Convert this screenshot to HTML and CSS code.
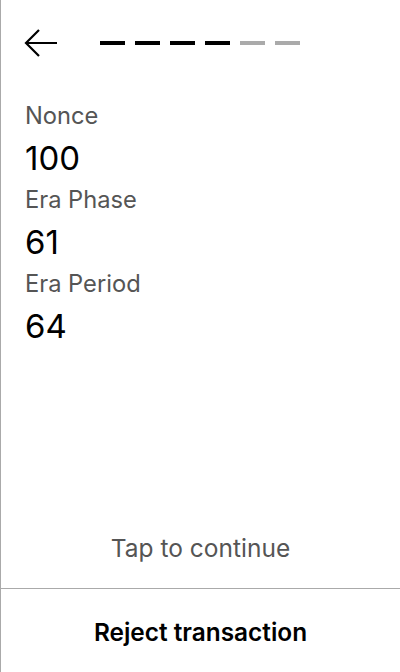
FILE: index.html
```html
<!DOCTYPE html>
<html>
<head>
<meta charset="utf-8">
<link rel="stylesheet" href="styles.css">
</head>
<body>
<div class="screen">
  <header class="header">
    <svg class="back" width="34" height="30" viewBox="0 0 34 30" fill="none" stroke="#000" stroke-width="2.2">
      <path d="M33 15 H2 M15 2 L2 15 L15 28"/>
    </svg>
    <div class="steps">
      <span class="step on"></span><span class="step on"></span><span class="step on"></span><span class="step on"></span><span class="step"></span><span class="step"></span>
    </div>
  </header>
  <main class="fields">
    <div class="label">Nonce</div>
    <div class="value">100</div>
    <div class="label">Era Phase</div>
    <div class="value">61</div>
    <div class="label">Era Period</div>
    <div class="value">64</div>
  </main>
  <div class="tap">Tap to continue</div>
  <div class="reject">Reject transaction</div>
</div>
</body>
</html>
```
FILE: styles.css
```css
html, body {
  margin: 0;
  padding: 0;
  background: #fff;
}
body {
  font-family: Inter, "Noto Sans", sans-serif;
}
.screen {
  height: 672px;
  box-sizing: border-box;
  border-left: 1px solid #aaa;
  display: flex;
  flex-direction: column;
}
.header {
  height: 86px;
  display: flex;
  align-items: center;
  padding-left: 23px;
  box-sizing: border-box;
}
.back {
  display: block;
}
.steps {
  display: flex;
  gap: 10px;
  margin-left: 42px;
}
.step {
  width: 25px;
  height: 4px;
  background: #aaa;
}
.step.on {
  background: #000;
}
.fields {
  padding: 12px 24px 0;
  flex: 1;
}
.label {
  font-size: 23.7px;
  line-height: 36px;
  color: #555;
}
.value {
  font-size: 33px;
  line-height: 48px;
  color: #000;
}
.tap {
  text-align: center;
  font-size: 24.5px;
  color: #555;
  line-height: 40px;
  padding-bottom: 20px;
}
.reject {
  border-top: 1px solid #aaa;
  height: 84px;
  box-sizing: border-box;
  padding-top: 3px;
  display: flex;
  align-items: center;
  justify-content: center;
  font-size: 24.4px;
  font-weight: 600;
  color: #000;
}
```
